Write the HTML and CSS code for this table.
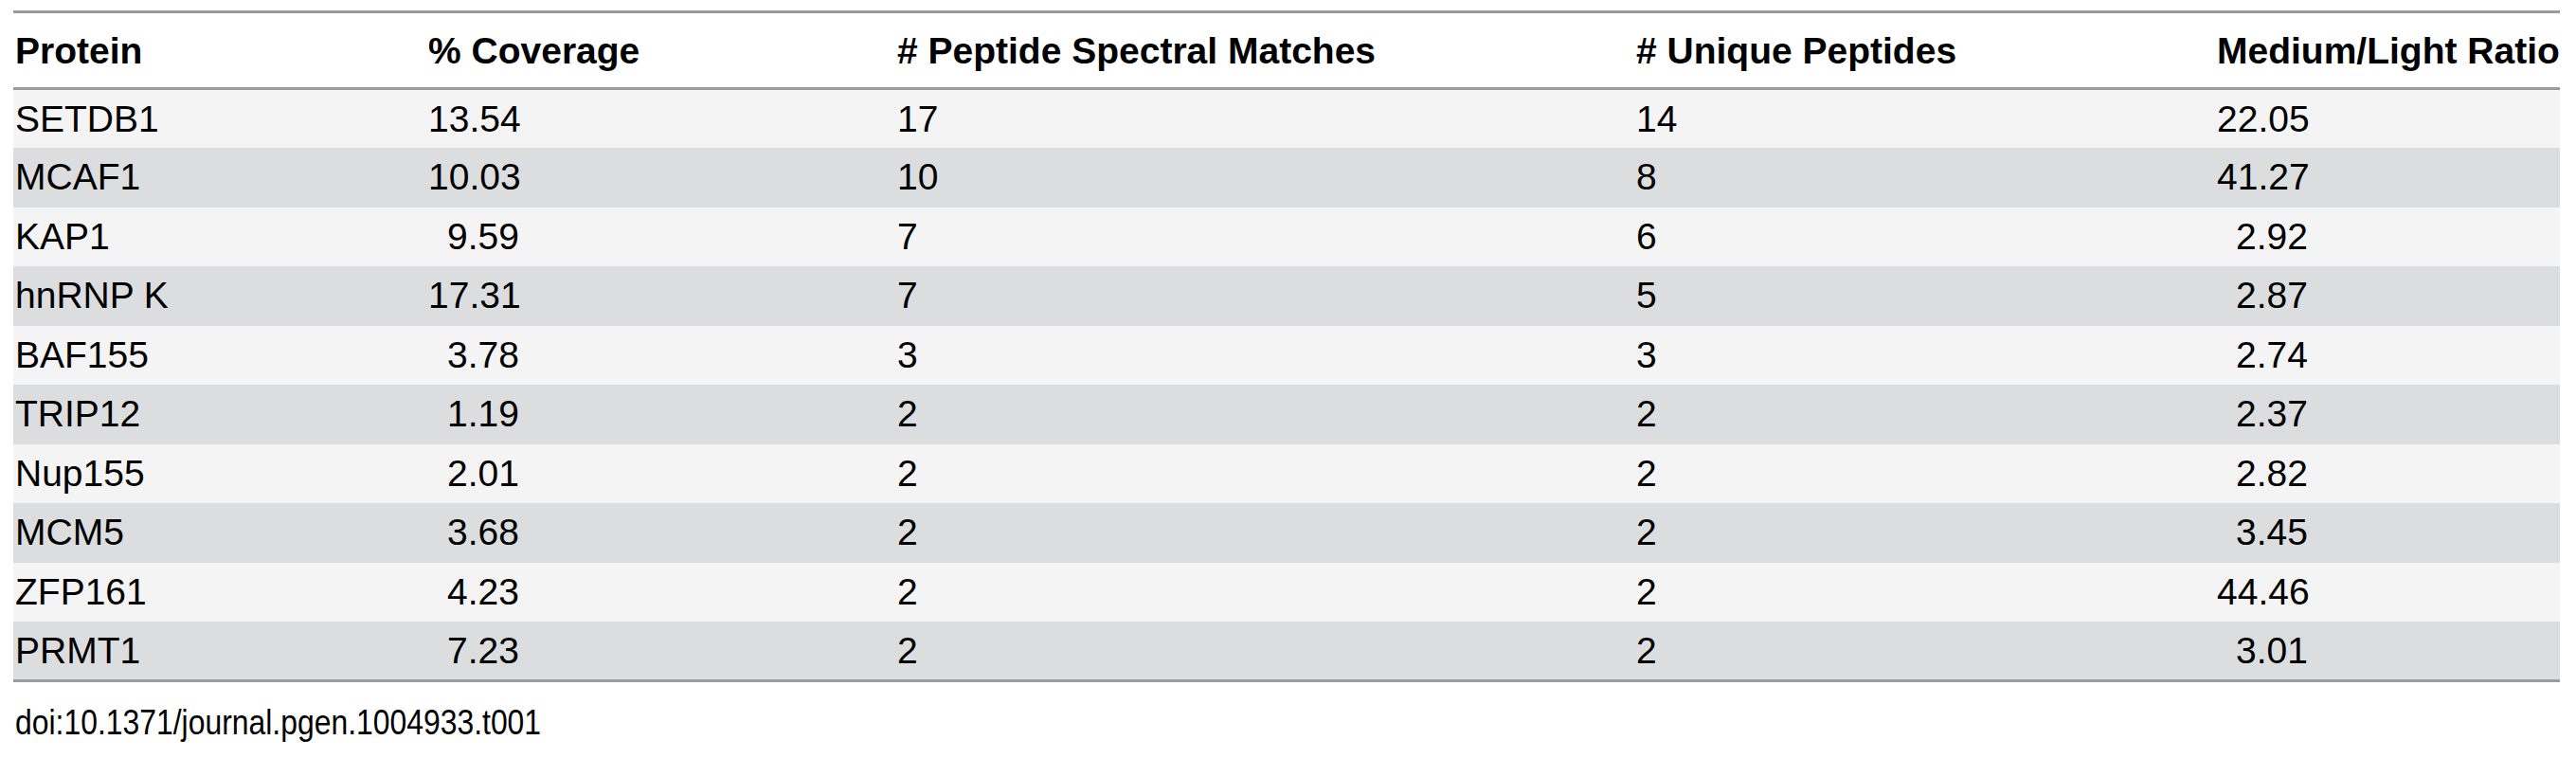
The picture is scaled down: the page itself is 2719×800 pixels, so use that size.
FILE: index.html
```html
<!DOCTYPE html>
<html>
<head>
<meta charset="utf-8">
<link rel="stylesheet" href="styles.css">
</head>
<body>
<div class="wrap">
  <table class="tbl">
    <colgroup>
      <col class="c1"><col class="c2"><col class="c3"><col class="c4"><col class="c5">
    </colgroup>
    <thead>
      <tr>
        <th>Protein</th>
        <th>% Coverage</th>
        <th># Peptide Spectral Matches</th>
        <th># Unique Peptides</th>
        <th>Medium/Light Ratio</th>
      </tr>
    </thead>
    <tbody>
      <tr><td>SETDB1</td><td><span class="num">13.54</span></td><td>17</td><td>14</td><td><span class="num">22.05</span></td></tr>
      <tr><td>MCAF1</td><td><span class="num">10.03</span></td><td>10</td><td>8</td><td><span class="num">41.27</span></td></tr>
      <tr><td>KAP1</td><td><span class="num">9.59</span></td><td>7</td><td>6</td><td><span class="num">2.92</span></td></tr>
      <tr><td>hnRNP K</td><td><span class="num">17.31</span></td><td>7</td><td>5</td><td><span class="num">2.87</span></td></tr>
      <tr><td>BAF155</td><td><span class="num">3.78</span></td><td>3</td><td>3</td><td><span class="num">2.74</span></td></tr>
      <tr><td>TRIP12</td><td><span class="num">1.19</span></td><td>2</td><td>2</td><td><span class="num">2.37</span></td></tr>
      <tr><td>Nup155</td><td><span class="num">2.01</span></td><td>2</td><td>2</td><td><span class="num">2.82</span></td></tr>
      <tr><td>MCM5</td><td><span class="num">3.68</span></td><td>2</td><td>2</td><td><span class="num">3.45</span></td></tr>
      <tr><td>ZFP161</td><td><span class="num">4.23</span></td><td>2</td><td>2</td><td><span class="num">44.46</span></td></tr>
      <tr><td>PRMT1</td><td><span class="num">7.23</span></td><td>2</td><td>2</td><td><span class="num">3.01</span></td></tr>
    </tbody>
  </table>
  <div class="doi"><span class="doi-text">doi:10.1371/journal.pgen.1004933.t001</span></div>
</div>
</body>
</html>
```

FILE: styles.css
```css
html, body {
  margin: 0;
  padding: 0;
  background: #ffffff;
}
body {
  font-family: "Liberation Sans", Arial, Helvetica, sans-serif;
  color: #000000;
}
.wrap {
  padding: 11px 0 0 14px;
  width: 2688px;
}
.tbl {
  width: 2688px;
  border-collapse: collapse;
  table-layout: fixed;
  font-size: 39px;
  border-top: 3px solid #9b9b9b;
  border-bottom: 3px solid #9b9b9b;
}
.c1 { width: 436px; }
.c2 { width: 495px; }
.c3 { width: 780px; }
.c4 { width: 613px; }
.c5 { width: 364px; }
.tbl th {
  text-align: left;
  font-weight: bold;
  height: 81px;
  padding: 2px 0 0 2px;
  white-space: nowrap;
  overflow: hidden;
  border-bottom: 3px solid #9b9b9b;
  vertical-align: middle;
  box-sizing: border-box;
}
.tbl td {
  height: 62.5px;
  padding: 0 0 0 2px;
  white-space: nowrap;
  vertical-align: middle;
  box-sizing: border-box;
}
.tbl tbody tr:nth-child(odd) { background: #f4f4f4; }
.tbl tbody tr:nth-child(even) { background: #dcdddf; }
.num {
  display: inline-block;
  width: 96px;
  text-align: right;
}
.doi {
  font-size: 37px;
  margin-top: 22px;
  padding-left: 2px;
}
.doi-text {
  display: inline-block;
  transform: scaleX(0.862);
  transform-origin: left center;
}
```
